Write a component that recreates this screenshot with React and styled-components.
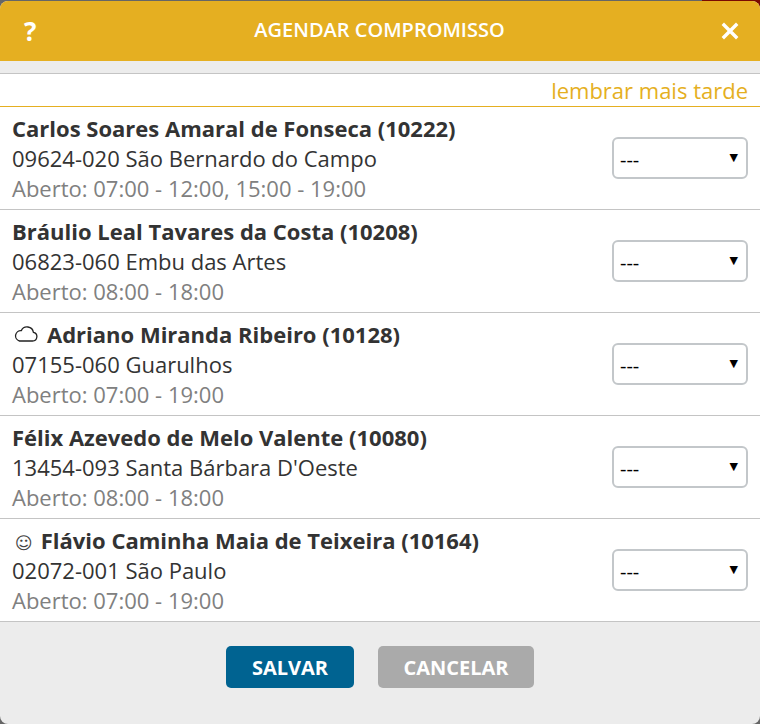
import React from "react";
import styled, { createGlobalStyle } from "styled-components";

const GlobalStyle = createGlobalStyle`
  html, body {
    margin: 0;
    padding: 0;
    height: 724px;
    overflow: hidden;
    background: #666666;
    font-family: "Open Sans", "Liberation Sans", sans-serif;
  }
  * { box-sizing: border-box; }
`;

const Backdrop = styled.div`
  width: 760px;
  height: 724px;
  padding-top: 1px;
  background: linear-gradient(90deg, #666666 702px, #7a0a00 702px);
  background-size: 100% 8px;
  background-repeat: no-repeat;
`;

const Dialog = styled.div`
  display: flex;
  flex-direction: column;
  height: 723px;
  border-radius: 8px;
  overflow: hidden;
  background: #ececec;
`;

const Header = styled.header`
  display: flex;
  align-items: center;
  justify-content: space-between;
  height: 60px;
  padding: 0 20px 0 24px;
  background: #e5af21;
  color: #fff;
`;

const HelpMark = styled.span`
  width: 15px;
  font-size: 26px;
  font-weight: 700;
  line-height: 30px;
`;

const Title = styled.h1`
  margin: -2px 0 0;
  font-size: 20px;
  font-weight: 600;
  line-height: 28px;
`;

const CloseIcon = styled.svg`
  display: block;
  width: 20px;
  height: 20px;
`;

const Body = styled.div`
  margin-top: 12px;
  border-top: 1px solid #c4c4c4;
  background: #fff;
`;

const RemindRow = styled.div`
  height: 33px;
  padding-right: 12px;
  border-bottom: 1px solid #e5af21;
  color: #e5af21;
  font-size: 22px;
  line-height: 32px;
  text-align: right;
`;

const Row = styled.div`
  display: flex;
  align-items: center;
  justify-content: space-between;
  height: 103px;
  padding: 0 12px 0 12px;
  border-bottom: 1px solid #c4c4c4;
`;

const Info = styled.div`
  display: flex;
  flex-direction: column;
`;

const Name = styled.div`
  display: flex;
  align-items: center;
  height: 30px;
  color: #333;
  font-size: 22px;
  font-weight: 700;
  line-height: 30px;
`;

const Address = styled.div`
  height: 31px;
  color: #333;
  font-size: 22px;
  line-height: 31px;
`;

const Hours = styled.div`
  height: 30px;
  color: #808080;
  font-size: 22px;
  line-height: 28px;
`;

const CloudIcon = styled.svg`
  display: block;
  width: 24px;
  height: 16px;
  margin: 0 9px 0 2px;
`;

const SmileIcon = styled.span`
  margin: 6px 8px 0 3px;
  color: #444;
  font-family: "DejaVu Sans", sans-serif;
  font-size: 17px;
  font-weight: 400;
  line-height: 24px;
`;

const SelectWrap = styled.div`
  position: relative;
  width: 136px;
  height: 42px;

  &::after {
    content: "▼";
    position: absolute;
    top: 11px;
    right: 10px;
    color: #000;
    font-family: "DejaVu Sans", sans-serif;
    font-size: 11px;
    line-height: 20px;
    pointer-events: none;
  }
`;

const Select = styled.select`
  display: block;
  width: 100%;
  height: 100%;
  padding: 2px 0 0 6px;
  border: 2px solid #c3c7ca;
  border-radius: 6px;
  background: #fff;
  color: #000;
  font-family: "Open Sans", "Liberation Sans", sans-serif;
  font-size: 20px;
  appearance: none;
`;

const Footer = styled.footer`
  display: flex;
  justify-content: center;
  gap: 24px;
  padding-top: 24px;
`;

const Button = styled.button`
  width: ${(p) => (p.$secondary ? "156px" : "128px")};
  height: 42px;
  padding: 0;
  border: 0;
  border-radius: 5px;
  background: ${(p) => (p.$secondary ? "#aaaaaa" : "#006391")};
  color: #fff;
  font-family: "Open Sans", "Liberation Sans", sans-serif;
  font-size: 20px;
  font-weight: 700;
`;

const people = [
  { name: "Carlos Soares Amaral de Fonseca (10222)", address: "09624-020 São Bernardo do Campo", hours: "Aberto: 07:00 - 12:00, 15:00 - 19:00" },
  { name: "Bráulio Leal Tavares da Costa (10208)", address: "06823-060 Embu das Artes", hours: "Aberto: 08:00 - 18:00" },
  { name: "Adriano Miranda Ribeiro (10128)", address: "07155-060 Guarulhos", hours: "Aberto: 07:00 - 19:00", mark: "cloud" },
  { name: "Félix Azevedo de Melo Valente (10080)", address: "13454-093 Santa Bárbara D'Oeste", hours: "Aberto: 08:00 - 18:00" },
  { name: "Flávio Caminha Maia de Teixeira (10164)", address: "02072-001 São Paulo", hours: "Aberto: 07:00 - 19:00", mark: "smile" },
];

function Mark({ type }) {
  if (type === "cloud") {
    return (
      <CloudIcon viewBox="0 0 24 16" fill="none" stroke="#222" strokeWidth="1.3">
        <path d="M5.5 15h13a4.4 4.4 0 0 0 .9-8.7A6.4 6.4 0 0 0 7.3 4.6 5.3 5.3 0 0 0 5.5 15z" />
      </CloudIcon>
    );
  }
  if (type === "smile") return <SmileIcon>☺</SmileIcon>;
  return null;
}

export default function App() {
  return (
    <>
      <GlobalStyle />
      <Backdrop>
        <Dialog>
          <Header>
            <HelpMark>?</HelpMark>
            <Title>AGENDAR COMPROMISSO</Title>
            <CloseIcon viewBox="0 0 20 20" stroke="#fff" strokeWidth="3.4" strokeLinecap="square">
              <path d="M4 4l12 12M16 4L4 16" />
            </CloseIcon>
          </Header>
          <Body>
            <RemindRow>lembrar mais tarde</RemindRow>
            {people.map((p) => (
              <Row key={p.name}>
                <Info>
                  <Name>
                    <Mark type={p.mark} />
                    {p.name}
                  </Name>
                  <Address>{p.address}</Address>
                  <Hours>{p.hours}</Hours>
                </Info>
                <SelectWrap>
                  <Select defaultValue="">
                    <option value="">---</option>
                  </Select>
                </SelectWrap>
              </Row>
            ))}
          </Body>
          <Footer>
            <Button>SALVAR</Button>
            <Button $secondary>CANCELAR</Button>
          </Footer>
        </Dialog>
      </Backdrop>
    </>
  );
}
